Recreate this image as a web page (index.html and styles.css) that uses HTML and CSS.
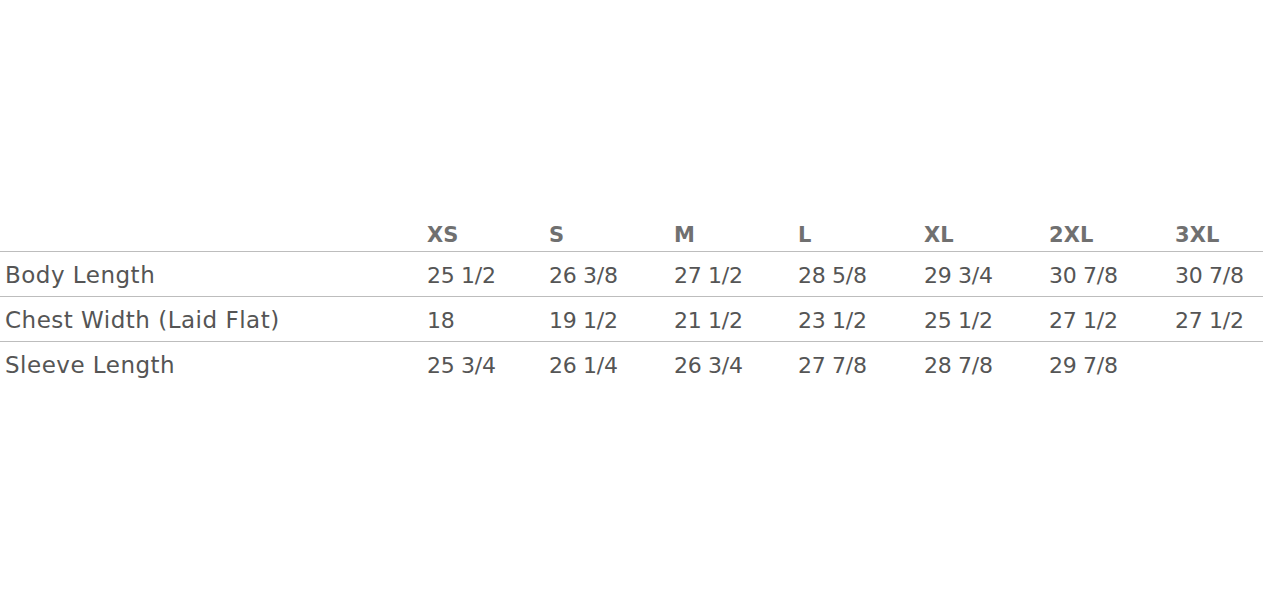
FILE: index.html
```html
<!DOCTYPE html>
<html>
<head>
<meta charset="utf-8">
<link rel="stylesheet" href="styles.css">
</head>
<body>
<div class="wrap">
<table class="size-table">
<colgroup>
<col class="c-label"><col class="c-a"><col class="c-b"><col class="c-c"><col class="c-d"><col class="c-e"><col class="c-f"><col class="c-g">
</colgroup>
<thead>
<tr><th></th><th>XS</th><th>S</th><th>M</th><th>L</th><th>XL</th><th>2XL</th><th>3XL</th></tr>
</thead>
<tbody>
<tr><td class="label">Body Length</td><td>25 1/2</td><td>26 3/8</td><td>27 1/2</td><td>28 5/8</td><td>29 3/4</td><td>30 7/8</td><td>30 7/8</td></tr>
<tr><td class="label">Chest Width (Laid Flat)</td><td>18</td><td>19 1/2</td><td>21 1/2</td><td>23 1/2</td><td>25 1/2</td><td>27 1/2</td><td>27 1/2</td></tr>
<tr><td class="label">Sleeve Length</td><td>25 3/4</td><td>26 1/4</td><td>26 3/4</td><td>27 7/8</td><td>28 7/8</td><td>29 7/8</td><td></td></tr>
</tbody>
</table>
</div>
</body>
</html>
```

FILE: styles.css
```css
html, body {
  margin: 0;
  padding: 0;
  background: #ffffff;
}
.wrap {
  padding-top: 219px;
  width: 1263px;
}
.size-table {
  width: 1263px;
  table-layout: fixed;
  border-collapse: collapse;
  font-family: "DejaVu Sans", sans-serif;
  color: #555555;
}
.c-label { width: 422px; }
.c-a { width: 122px; }
.c-b { width: 125px; }
.c-c { width: 124px; }
.c-d { width: 126px; }
.c-e { width: 125px; }
.c-f { width: 126px; }
.c-g { width: 93px; }
.size-table th {
  text-align: left;
  font-weight: bold;
  font-size: 21px;
  letter-spacing: 0.1px;
  color: #707070;
  padding: 0 0 0 5px;
  height: 32px;
  vertical-align: middle;
  border-bottom: 1px solid #bdbdbd;
}
.size-table td {
  text-align: left;
  font-size: 22px;
  letter-spacing: -0.3px;
  font-weight: normal;
  padding: 2px 0 0 5px;
  height: 42px;
  vertical-align: middle;
  border-top: 1px solid #bdbdbd;
  white-space: nowrap;
}
.size-table td.label {
  letter-spacing: 0.5px;
  font-size: 23px;
}
.size-table tbody tr:first-child td {
  border-top: none;
}
```
